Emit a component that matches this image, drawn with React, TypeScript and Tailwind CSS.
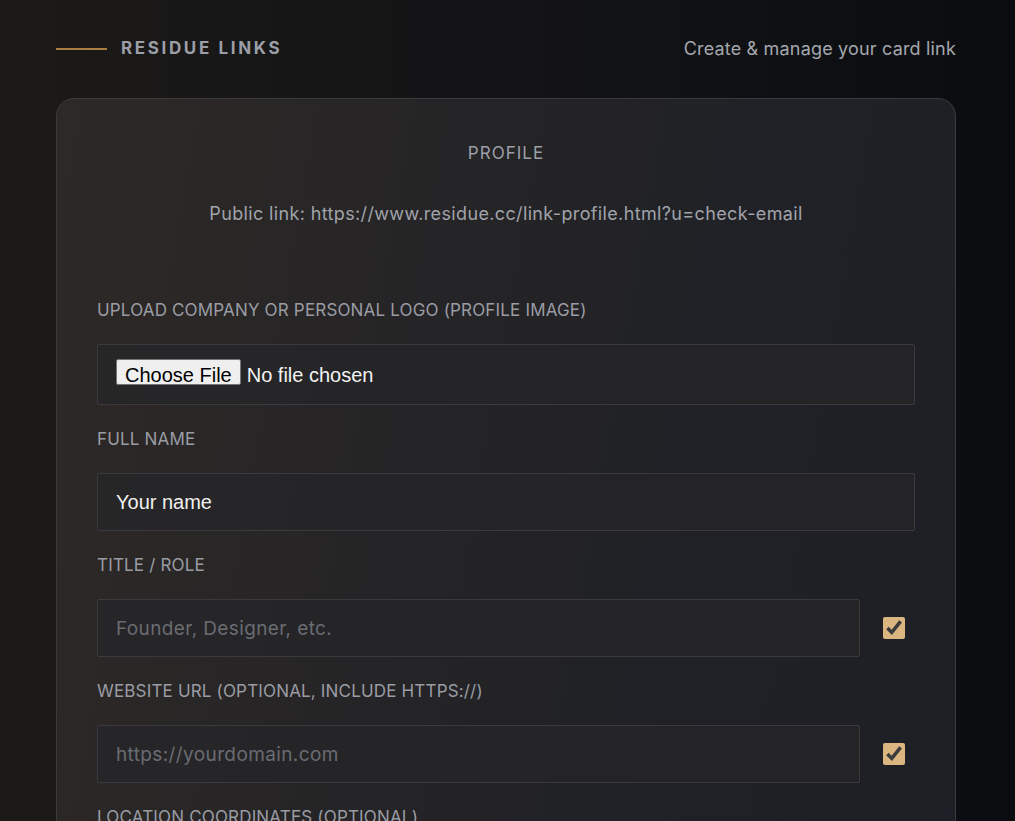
import React from 'react';

const font = { fontFamily: 'Inter, "Noto Sans", sans-serif' };
const sysFont = { fontFamily: '"Liberation Sans", Arial, sans-serif' };

function Field({
  label,
  children,
}: {
  label: string;
  children: React.ReactNode;
}) {
  return (
    <div className="mt-6">
      <div className="text-[17px] leading-[20px] tracking-[0.01em] text-[#9a9ca4] uppercase">{label}</div>
      <div className="mt-6">{children}</div>
    </div>
  );
}

function TextInput({ placeholder, value }: { placeholder: string; value?: string }) {
  return (
    <input
      type="text"
      defaultValue={value}
      placeholder={placeholder}
      className="w-full h-[58px] px-[18px] bg-[#252528]/80 border border-[#3a3a3e] rounded-[2px] text-[20px] text-[#f0f0f0] placeholder:text-[#6a6c73] placeholder:text-[19px] placeholder:tracking-[0.02em] outline-none"
      style={value ? sysFont : font}
    />
  );
}

function CheckRow({ placeholder }: { placeholder: string }) {
  return (
    <div className="flex items-center gap-[23px] pr-[10px]">
      <div className="flex-1">
        <TextInput placeholder={placeholder} />
      </div>
      <input
        type="checkbox"
        defaultChecked
        className="w-[22px] h-[22px] accent-[#dcb680] m-0 shrink-0"
      />
    </div>
  );
}

export default function App() {
  return (
    <div
      className="min-h-screen w-full bg-[linear-gradient(90deg,#1c1a18_0%,#151516_35%,#111216_65%,#0b0c10_100%)]"
      style={font}
    >
      <div className="w-[900px] ml-[56px] pt-[32px]">
        {/* Header */}
        <div className="flex items-center justify-between h-[30px]">
          <div className="flex items-center mt-[3px]">
            <div className="w-[51px] h-[2px] bg-[#c99a4c]/80" />
            <span className="ml-[14px] text-[17px] font-bold tracking-[0.155em] text-[#9b9ea7]">RESIDUE LINKS</span>
          </div>
          <span className="text-[18px] tracking-[0.01em] text-[#a4a7ae] mt-[2px]">Create &amp; manage your card link</span>
        </div>

        {/* Card */}
        <div className="mt-[36px] rounded-[18px] border border-[#3b3b3f] bg-[linear-gradient(100deg,#2d2926_0%,#272526_30%,#212226_60%,#1d1f26_100%)] px-[40px] pt-[40px] pb-[60px]">
          <div className="text-center text-[17px] leading-[28px] tracking-[0.06em] text-[#9c9fa7]">PROFILE</div>
          <div className="mt-[35px] text-center text-[18px] leading-[24px] tracking-[0.02em] text-[#a0a3aa]">
            Public link: https://www.residue.cc/link-profile.html?u=check-email
          </div>

          <div className="mt-[74px]">
            <Field label="Upload company or personal logo (profile image)">
              <div className="h-[61px] border border-[#3a3a3e] bg-[#252528]/80 rounded-[2px] flex items-center px-[18px]">
                <input
                  type="file"
                  className="text-[20px] text-[#f2f2f2] file:text-[20px] file:px-[8px] file:py-0 file:h-[26px] file:bg-[#efefef] file:text-black file:border file:border-[#767676] file:rounded-[2px] file:mr-[6px]"
                  style={sysFont}
                />
              </div>
            </Field>
            <Field label="Full name">
              <TextInput placeholder="Your name" value="Your name" />
            </Field>
            <Field label="Title / Role">
              <CheckRow placeholder="Founder, Designer, etc." />
            </Field>
            <Field label="Website URL (optional, include https://)">
              <CheckRow placeholder="https://yourdomain.com" />
            </Field>
            <Field label="Location coordinates (optional)">
              <CheckRow placeholder="40.7128, -74.0060" />
            </Field>
          </div>
        </div>
      </div>
    </div>
  );
}
